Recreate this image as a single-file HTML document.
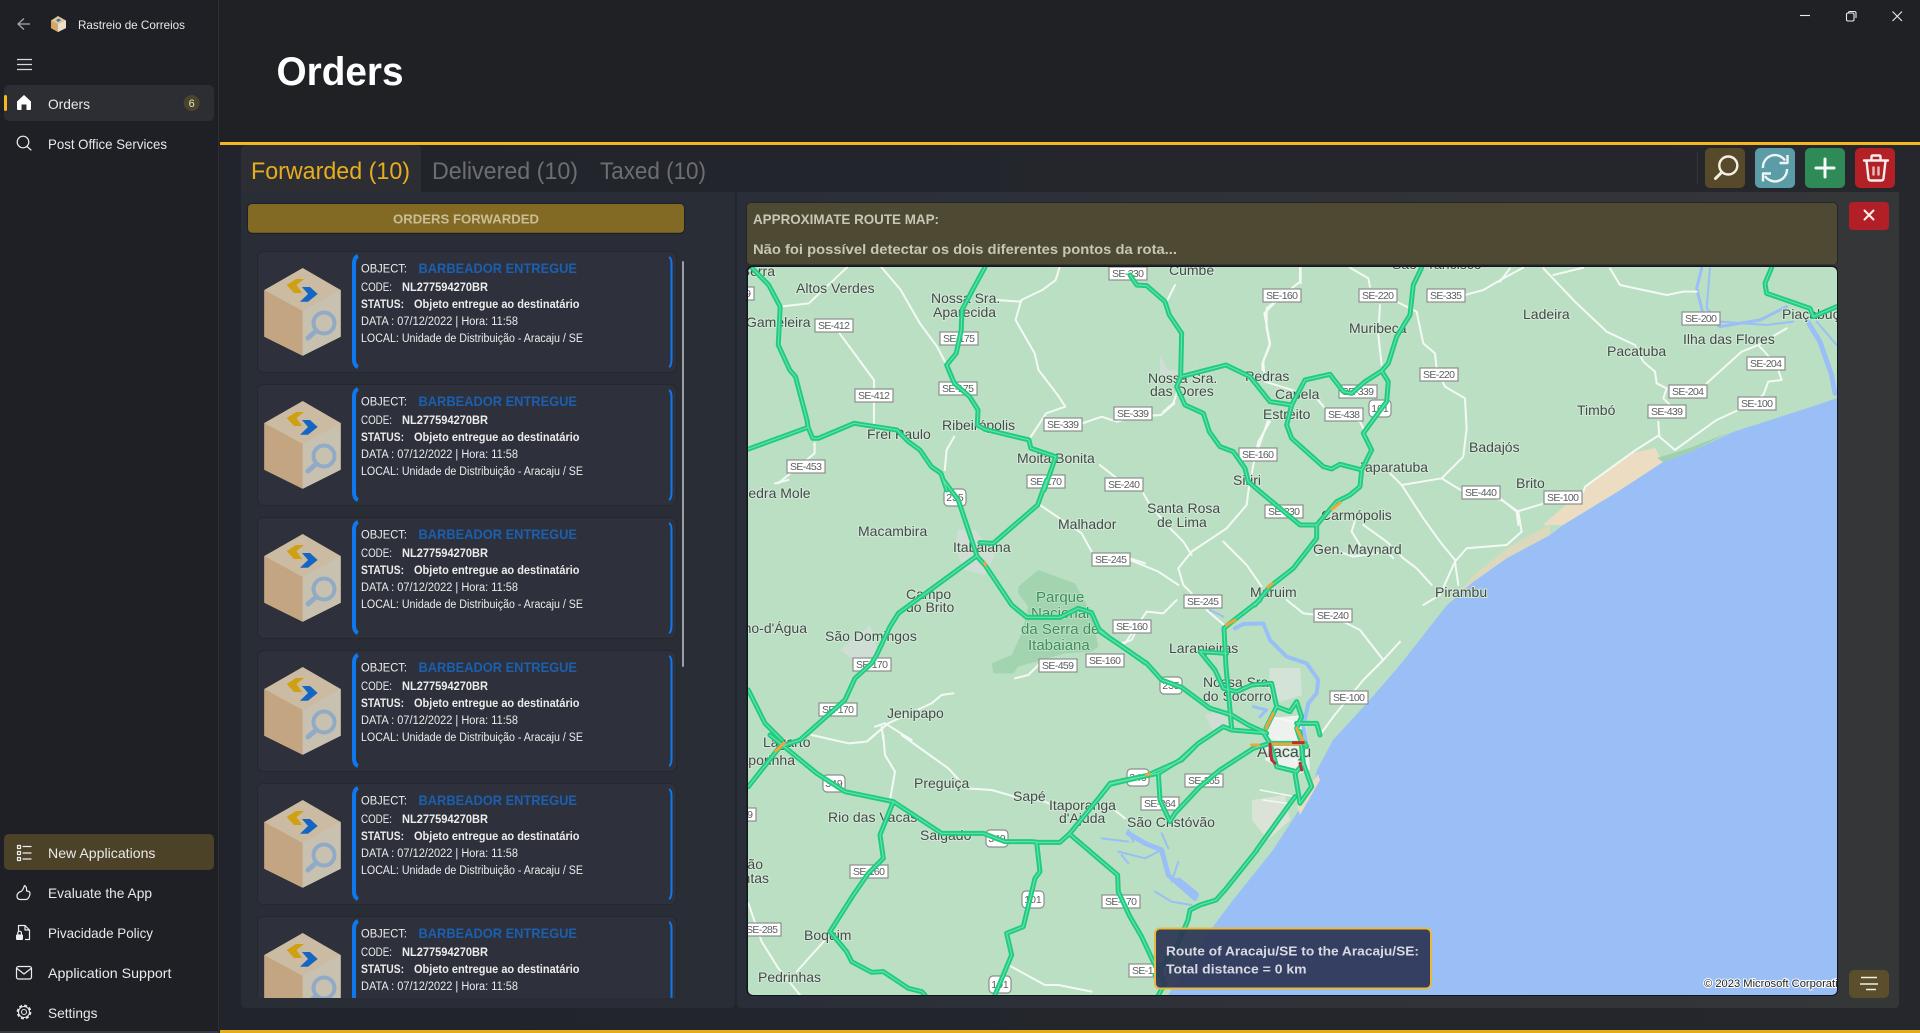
<!DOCTYPE html>
<html lang="en"><head><meta charset="utf-8"><title>Rastreio de Correios</title>
<style>
html,body{margin:0;padding:0;background:#1f2125;width:1920px;height:1033px;overflow:hidden}
svg{display:block;font-family:"Liberation Sans",Arial,sans-serif}
#traf path,.w path,.rv path{vector-effect:non-scaling-stroke}
.w{fill:none;stroke:#f4f9f5;stroke-width:2;stroke-linejoin:round;stroke-linecap:round}
.rv{fill:none;stroke:#9abff6;stroke-linejoin:round;stroke-linecap:round}
.l{font-size:14px;fill:#434c47;paint-order:stroke;stroke:#d3e9d8;stroke-width:2px}
.p{font-size:15px;fill:#3e8c5c;paint-order:stroke;stroke:#c5e5cd;stroke-width:1.5px}
.s rect{fill:#fff;stroke:#8a8f8c;stroke-width:1.2}
.s text{font-size:10.5px;fill:#5a605d;text-anchor:middle}
.n{font-size:14px;fill:#e9e9ea}
.c1{font-size:12px;fill:#ececec}
.c2{font-size:11.5px;fill:#ececec}
.b{font-weight:bold}
.ic{fill:none;stroke:#ededed;stroke-width:1.2;stroke-linecap:round;stroke-linejoin:round}
</style></head><body>
<svg xmlns="http://www.w3.org/2000/svg" width="1920" height="1033" viewBox="0 0 1920 1033">
<defs>
<clipPath id="mc"><rect x="748" y="267" width="1089" height="728" rx="5"/></clipPath>
<clipPath id="lc"><rect x="250" y="240" width="440" height="758"/></clipPath>
<filter id="bl" x="-1%" y="-1%" width="102%" height="102%"><feGaussianBlur stdDeviation=".35"/></filter>
<linearGradient id="pg" x1="0" x2="1" y1="0" y2="0"><stop offset="0" stop-color="#2a2e38"/><stop offset="1" stop-color="#353638"/></linearGradient>
<linearGradient id="mg" x1="0" x2="1" y1="0" y2="0"><stop offset="0" stop-color="#21242c"/><stop offset="1" stop-color="#26272c"/></linearGradient>
<g id="box">
<polygon points="302.7,268 340.7,290 340.7,336.7 302.7,355.7 264.3,336.7 264.3,290" fill="#cbbba2"/>
<polygon points="264.3,290 302.7,311 302.7,355.7 264.3,336.7" fill="#c3a681"/>
<polygon points="302.7,311 340.7,290 340.7,336.7 302.7,355.7" fill="#c9c1b0"/>
<path d="M286.7 285L296 279H304L296.5 285L302 293H294Z" fill="#cfa112"/>
<path d="M302 287H310L317.7 294L308 301.7H300L308 294Z" fill="#1466c4"/>
<circle cx="324" cy="323" r="10.5" fill="none" stroke="#91abc6" stroke-width="4"/>
<path d="M316 331L308 338" stroke="#91abc6" stroke-width="5" stroke-linecap="round"/>
</g>
<g id="card">
<rect x="257.5" y="251.5" width="419" height="121" rx="6" fill="#2e313b" stroke="#25272f"/>
<path d="M358 256C355.500 257 354 260 354 264V359C354 363 355.500 366 358 367" fill="none" stroke="#0f78ec" stroke-width="4"/>
<path d="M669 257C671 258 671.500 261 671.500 264V359C671.500 363 671 366 669 367" fill="none" stroke="#0f78ec" stroke-width="2"/>
<use href="#box"/>
</g>
<g id="traf">
<g transform="translate(740,190) scale(.3827,.3333)">
<path d="M30 232L75 285L105 350L100 465L130 540L145 560L175 690L178 712L190 745L205 745L298 700L410 720L440 755L470 780L500 830L525 850L540 900"/>
<path d="M20 778L178 712"/>
<path d="M640 232L610 295L580 360L578 420L565 490L540 525L560 580L600 620L622 660L620 705L640 718L755 750L760 775L825 800L795 900"/>
</g>
<g transform="translate(1130,265) scale(.3333)">
<path d="M0 30L20 60L50 62L105 110L118 150L155 205L152 335L288 300L360 335L420 410L485 420L525 345L600 328L640 380L665 385L705 350L755 318L775 295L800 215L840 150L850 60L875 8"/>
<path d="M152 335L140 365L165 420L220 445L238 500L270 545L310 560L345 610L355 650L390 680L510 780L560 780L560 820L490 910L420 965L375 1020"/>
<path d="M485 420L470 480L485 520L580 605L605 612L630 598L695 615L690 665L660 690L620 710L560 780"/>
<path d="M755 318L775 350L770 410L700 505L725 555L695 615"/>
</g>
<g transform="translate(745,480) scale(.3333)">
<path d="M595 0L640 60L695 225"/>
<path d="M905 0L878 75L745 190L705 188"/>
<path d="M695 228L460 400L435 440L395 525L380 550L330 595L300 660L165 780"/>
<path d="M695 228L720 255L800 375L845 412L945 412L1000 385L1040 398L1065 455L1125 495L1200 548"/>
<path d="M10 630L60 730L110 780"/>
</g>
<g transform="translate(745,735) scale(.3333)">
<path d="M165 15L105 35L10 155"/>
<path d="M75 0L215 115L300 170L445 200L590 295L715 295L780 320L860 320L880 322L945 322L975 295L1095 148L1205 122L1310 75L1350 35"/>
<path d="M445 200L405 300L415 370L370 415L325 480L255 590L305 650L320 680L380 712L415 710L490 760L530 770L540 780"/>
<path d="M875 322L885 410L870 430L835 575L785 595L800 660L750 780"/>
<path d="M975 298L1118 420L1120 470L1155 545L1190 605L1225 680L1260 745L1235 790"/>
</g>
<g transform="translate(1100,600) scale(.3333)">
<path d="M480 0L400 62L372 85L378 200L395 385"/>
<path d="M0 90L30 115L140 190L185 240L245 262L330 325L395 345L445 375L500 400"/>
<path d="M300 155L380 160M300 155L345 210L370 265L410 275L455 255L515 250L530 320L570 335L590 305L605 350L590 385L600 415L620 440"/>
<path d="M0 590L30 550L100 535L175 520L240 480L295 430L370 380L395 390L490 398L510 430L615 430"/>
<path d="M175 520L180 600L210 665L225 640L300 560L360 510L460 445L510 430"/>
<path d="M510 430L530 500L590 515L610 490L600 395"/>
<path d="M590 370L650 370L660 405"/>
<path d="M530 320L498 385"/>
<path d="M610 490L635 560L600 610L585 520M585 590L470 750"/>
</g>
<path d="M1257 850L1225 890L1216 900L1200 905L1190 910L1188 920L1175 950L1155 975"/>
<g transform="translate(1500,265) scale(.3333)">
<path d="M815 8L795 55L800 85L930 130L940 155L1010 125"/>
</g>
</g>
</defs>

<!-- shell -->
<rect width="1920" height="1033" fill="#1f2125"/>
<rect x="0" y="0" width="218" height="1033" fill="#1e2026"/>
<rect x="218" y="0" width="1" height="1033" fill="#2d2f33"/>
<rect x="220" y="145" width="1700" height="885" fill="url(#mg)"/>
<rect x="220" y="142" width="1700" height="3" fill="#f4b71e"/>
<rect x="220" y="1030" width="1700" height="3" fill="#e6ab1d"/>
<rect x="0" y="1031" width="218" height="2" fill="#35373b"/>

<!-- window controls -->
<g fill="none" stroke="#ececec" stroke-width="1.1">
<path d="M1800 15.500H1810"/>
<rect x="1846.500" y="13" width="7.500" height="8" rx="1.500"/>
<path d="M1848.500 12.500Q1848.500 11.500 1850 11.500H1854.500Q1856 11.500 1856 13V18"/>
<path d="M1892.500 11.500L1902 21M1902 11.500L1892.500 21"/>
</g>

<!-- sidebar top -->
<path d="M30 24H18.500M24 18.500L18 24L24 29.500" fill="none" stroke="#a9aaac" stroke-width="1.200"/>
<polygon points="58,16 66,20.500 66,28 58,32 51,28 51,20.500" fill="#e2c595"/>
<polygon points="51,20.500 58,24 58,32 51,28" fill="#d6a668"/>
<polygon points="58,24 66,20.500 66,28 58,32" fill="#e8dfcc"/>
<path d="M56 20L59 18.500L61 20.500L58 22Z" fill="#2a78c8"/>
<text x="78" y="29" font-size="12" fill="#e8e8e8" textLength="107" lengthAdjust="spacingAndGlyphs">Rastreio de Correios</text>
<path d="M17 59.500H32M17 64.500H32M17 69.500H32" stroke="#d8d8d8" stroke-width="1.200"/>

<rect x="4" y="85" width="210" height="36" rx="5" fill="#2d2e33"/>
<rect x="4" y="95" width="3" height="16" rx="1.500" fill="#f4b71e"/>
<path d="M24 95L31 101.500V109Q31 110 30 110H26.500V104.500H21.500V110H18Q17 110 17 109V101.500Z" fill="#fff"/>
<text x="48" y="109" class="n" textLength="42" lengthAdjust="spacingAndGlyphs">Orders</text>
<circle cx="191.700" cy="103" r="8" fill="#4b442a"/>
<text x="191.700" y="107" font-size="11" fill="#e4e0d2" text-anchor="middle">6</text>
<g class="ic"><circle cx="23" cy="142" r="5.800"/><path d="M27 146.500L31 150"/></g>
<text x="48" y="149" class="n" textLength="119" lengthAdjust="spacingAndGlyphs">Post Office Services</text>

<!-- sidebar bottom -->
<rect x="4" y="834" width="210" height="36" rx="5" fill="#4c4227"/>
<g class="ic"><rect x="17.500" y="845.500" width="3" height="3"/><rect x="17.500" y="851.500" width="3" height="3"/><rect x="17.500" y="857.500" width="3" height="3"/><path d="M23 846.500H31M23 853H31M23 859H31"/></g>
<text x="48" y="858" class="n" textLength="107.500" lengthAdjust="spacingAndGlyphs">New Applications</text>
<path class="ic" d="M24.500 885.500C23.500 888 23 890.500 21 891.500C18.500 892 17 894 17 896C17 898.500 18.500 899.500 20.500 899.500H26C28 899.500 30 896 30 893.500C30 891.500 28.500 891 26.500 891C26.800 888.500 26.500 886.500 24.500 885.500Z"/>
<text x="48" y="898" class="n" textLength="104" lengthAdjust="spacingAndGlyphs">Evaluate the App</text>
<g class="ic"><path d="M18.500 931V925.500H25L29.500 930V939.500H25.500M25 925.500V930H29.500"/><path d="M17.800 934.500V933A1.800 1.800 0 0 1 21.400 933V934.500"/></g>
<rect x="16" y="934.500" width="7" height="5.500" rx="1" fill="#f0f0f0"/>
<text x="48" y="938" class="n" textLength="105" lengthAdjust="spacingAndGlyphs">Pivacidade Policy</text>
<g class="ic"><rect x="16.500" y="966.500" width="15" height="12.500" rx="2"/><path d="M17 968.500L24 974L31 968.500"/></g>
<text x="48" y="978" class="n" textLength="123.500" lengthAdjust="spacingAndGlyphs">Application Support</text>
<g fill="none" stroke="#e4e4e4"><circle cx="24" cy="1012" r="2.500" stroke-width="1.100"/><circle cx="24" cy="1012" r="5.500" stroke-width="1.100"/><circle cx="24" cy="1012" r="6.500" stroke-width="1.800" stroke-dasharray="3 2.100"/></g>
<text x="48" y="1018" class="n" textLength="49.500" lengthAdjust="spacingAndGlyphs">Settings</text>

<!-- title -->
<text x="276.500" y="85" font-size="40" font-weight="bold" fill="#fff" textLength="127" lengthAdjust="spacingAndGlyphs">Orders</text>

<!-- tabs -->
<path d="M241 192V150Q241 145 246 145H416Q421 145 421 150V192Z" fill="#2c2e33"/>
<text x="251" y="179" font-size="24" fill="#e6ad1e" textLength="159" lengthAdjust="spacingAndGlyphs">Forwarded (10)</text>
<text x="432" y="179" font-size="24" fill="#6c6e72" textLength="146" lengthAdjust="spacingAndGlyphs">Delivered (10)</text>
<text x="600" y="179" font-size="24" fill="#6c6e72" textLength="106" lengthAdjust="spacingAndGlyphs">Taxed (10)</text>

<!-- toolbar -->
<rect x="1697" y="152" width="1" height="32" fill="#33353b"/>
<rect x="1705" y="148" width="40" height="40" rx="5" fill="#574a2a"/>
<g fill="none" stroke="#f4f0e4"><circle cx="1728.300" cy="165.500" r="9" stroke-width="2.400"/><path d="M1721.500 172.500L1715.500 178.500" stroke-width="3" stroke-linecap="round"/></g>
<rect x="1755" y="148" width="40" height="40" rx="5" fill="#5b9ca6"/>
<g fill="none" stroke="#eef5f5" stroke-width="2.400" stroke-linejoin="round">
<path d="M1763 168A12 12 0 0 1 1785 160.500"/><path d="M1787.500 155V163H1779.500" stroke-width="2.400"/>
<path d="M1787 169A12 12 0 0 1 1765 176"/><path d="M1763 181.500V173.500H1771"/>
</g>
<rect x="1805" y="148" width="40" height="40" rx="5" fill="#2e8a57"/>
<path d="M1825 159V177M1816 168H1834" stroke="#f4faf6" stroke-width="3" stroke-linecap="round"/>
<rect x="1855" y="148" width="40" height="40" rx="5" fill="#b32025"/>
<g fill="none" stroke="#f6eeee" stroke-width="2.400" stroke-linejoin="round" stroke-linecap="round">
<path d="M1864 160.500H1888M1871.500 160V157Q1871.500 155.500 1873 155.500H1879Q1880.500 155.500 1880.500 157V160"/>
<path d="M1866.500 161L1868.500 178.500Q1868.800 180.500 1871 180.500H1881Q1883.200 180.500 1883.500 178.500L1885.500 161"/>
<path d="M1873.500 167.500V174.500M1878.500 167.500V174.500" stroke="#e2b9b9" stroke-width="2.500"/>
</g>

<!-- panels -->
<path d="M241 192H735V1003Q735 1008 730 1008H246Q241 1008 241 1003Z" fill="#292d36"/>
<path d="M737 192H1899V1003Q1899 1008 1894 1008H742Q737 1008 737 1003Z" fill="url(#pg)"/>

<!-- left list -->
<rect x="247" y="203" width="438" height="31" rx="5" fill="#1f2128"/>
<rect x="248" y="204" width="436" height="28.700" rx="4" fill="#826a24"/>
<text x="466" y="223.500" font-size="13" font-weight="bold" fill="#c9bd95" text-anchor="middle" textLength="146" lengthAdjust="spacingAndGlyphs">ORDERS FORWARDED</text>
<rect x="682" y="261" width="2" height="406" rx="1" fill="#9c9ea2"/>

<g clip-path="url(#lc)">
<g><use href="#card"/>
<text x="361" y="272.500" class="c1" textLength="46" lengthAdjust="spacingAndGlyphs">OBJECT:</text>
<text x="418.500" y="273" font-size="14" class="b" fill="#1b5fae" textLength="158.500" lengthAdjust="spacingAndGlyphs">BARBEADOR ENTREGUE</text>
<text x="361" y="291" class="c2" textLength="31" lengthAdjust="spacingAndGlyphs">CODE:</text>
<text x="402" y="291" class="c2 b" textLength="86" lengthAdjust="spacingAndGlyphs">NL277594270BR</text>
<text x="361" y="308" class="c2 b" textLength="43" lengthAdjust="spacingAndGlyphs">STATUS:</text>
<text x="414" y="308" class="c2 b" textLength="165.500" lengthAdjust="spacingAndGlyphs">Objeto entregue ao destinatário</text>
<text x="361" y="325" class="c2" textLength="157" lengthAdjust="spacingAndGlyphs">DATA : 07/12/2022 | Hora: 11:58</text>
<text x="361" y="342" class="c2" textLength="222" lengthAdjust="spacingAndGlyphs">LOCAL: Unidade de Distribuição - Aracaju / SE</text></g>
<g transform="translate(0,133)"><use href="#card"/>
<text x="361" y="272.500" class="c1" textLength="46" lengthAdjust="spacingAndGlyphs">OBJECT:</text>
<text x="418.500" y="273" font-size="14" class="b" fill="#1b5fae" textLength="158.500" lengthAdjust="spacingAndGlyphs">BARBEADOR ENTREGUE</text>
<text x="361" y="291" class="c2" textLength="31" lengthAdjust="spacingAndGlyphs">CODE:</text>
<text x="402" y="291" class="c2 b" textLength="86" lengthAdjust="spacingAndGlyphs">NL277594270BR</text>
<text x="361" y="308" class="c2 b" textLength="43" lengthAdjust="spacingAndGlyphs">STATUS:</text>
<text x="414" y="308" class="c2 b" textLength="165.500" lengthAdjust="spacingAndGlyphs">Objeto entregue ao destinatário</text>
<text x="361" y="325" class="c2" textLength="157" lengthAdjust="spacingAndGlyphs">DATA : 07/12/2022 | Hora: 11:58</text>
<text x="361" y="342" class="c2" textLength="222" lengthAdjust="spacingAndGlyphs">LOCAL: Unidade de Distribuição - Aracaju / SE</text></g>
<g transform="translate(0,266)"><use href="#card"/>
<text x="361" y="272.500" class="c1" textLength="46" lengthAdjust="spacingAndGlyphs">OBJECT:</text>
<text x="418.500" y="273" font-size="14" class="b" fill="#1b5fae" textLength="158.500" lengthAdjust="spacingAndGlyphs">BARBEADOR ENTREGUE</text>
<text x="361" y="291" class="c2" textLength="31" lengthAdjust="spacingAndGlyphs">CODE:</text>
<text x="402" y="291" class="c2 b" textLength="86" lengthAdjust="spacingAndGlyphs">NL277594270BR</text>
<text x="361" y="308" class="c2 b" textLength="43" lengthAdjust="spacingAndGlyphs">STATUS:</text>
<text x="414" y="308" class="c2 b" textLength="165.500" lengthAdjust="spacingAndGlyphs">Objeto entregue ao destinatário</text>
<text x="361" y="325" class="c2" textLength="157" lengthAdjust="spacingAndGlyphs">DATA : 07/12/2022 | Hora: 11:58</text>
<text x="361" y="342" class="c2" textLength="222" lengthAdjust="spacingAndGlyphs">LOCAL: Unidade de Distribuição - Aracaju / SE</text></g>
<g transform="translate(0,399)"><use href="#card"/>
<text x="361" y="272.500" class="c1" textLength="46" lengthAdjust="spacingAndGlyphs">OBJECT:</text>
<text x="418.500" y="273" font-size="14" class="b" fill="#1b5fae" textLength="158.500" lengthAdjust="spacingAndGlyphs">BARBEADOR ENTREGUE</text>
<text x="361" y="291" class="c2" textLength="31" lengthAdjust="spacingAndGlyphs">CODE:</text>
<text x="402" y="291" class="c2 b" textLength="86" lengthAdjust="spacingAndGlyphs">NL277594270BR</text>
<text x="361" y="308" class="c2 b" textLength="43" lengthAdjust="spacingAndGlyphs">STATUS:</text>
<text x="414" y="308" class="c2 b" textLength="165.500" lengthAdjust="spacingAndGlyphs">Objeto entregue ao destinatário</text>
<text x="361" y="325" class="c2" textLength="157" lengthAdjust="spacingAndGlyphs">DATA : 07/12/2022 | Hora: 11:58</text>
<text x="361" y="342" class="c2" textLength="222" lengthAdjust="spacingAndGlyphs">LOCAL: Unidade de Distribuição - Aracaju / SE</text></g>
<g transform="translate(0,532)"><use href="#card"/>
<text x="361" y="272.500" class="c1" textLength="46" lengthAdjust="spacingAndGlyphs">OBJECT:</text>
<text x="418.500" y="273" font-size="14" class="b" fill="#1b5fae" textLength="158.500" lengthAdjust="spacingAndGlyphs">BARBEADOR ENTREGUE</text>
<text x="361" y="291" class="c2" textLength="31" lengthAdjust="spacingAndGlyphs">CODE:</text>
<text x="402" y="291" class="c2 b" textLength="86" lengthAdjust="spacingAndGlyphs">NL277594270BR</text>
<text x="361" y="308" class="c2 b" textLength="43" lengthAdjust="spacingAndGlyphs">STATUS:</text>
<text x="414" y="308" class="c2 b" textLength="165.500" lengthAdjust="spacingAndGlyphs">Objeto entregue ao destinatário</text>
<text x="361" y="325" class="c2" textLength="157" lengthAdjust="spacingAndGlyphs">DATA : 07/12/2022 | Hora: 11:58</text>
<text x="361" y="342" class="c2" textLength="222" lengthAdjust="spacingAndGlyphs">LOCAL: Unidade de Distribuição - Aracaju / SE</text></g>
<g transform="translate(0,665)"><use href="#card"/>
<text x="361" y="272.500" class="c1" textLength="46" lengthAdjust="spacingAndGlyphs">OBJECT:</text>
<text x="418.500" y="273" font-size="14" class="b" fill="#1b5fae" textLength="158.500" lengthAdjust="spacingAndGlyphs">BARBEADOR ENTREGUE</text>
<text x="361" y="291" class="c2" textLength="31" lengthAdjust="spacingAndGlyphs">CODE:</text>
<text x="402" y="291" class="c2 b" textLength="86" lengthAdjust="spacingAndGlyphs">NL277594270BR</text>
<text x="361" y="308" class="c2 b" textLength="43" lengthAdjust="spacingAndGlyphs">STATUS:</text>
<text x="414" y="308" class="c2 b" textLength="165.500" lengthAdjust="spacingAndGlyphs">Objeto entregue ao destinatário</text>
<text x="361" y="325" class="c2" textLength="157" lengthAdjust="spacingAndGlyphs">DATA : 07/12/2022 | Hora: 11:58</text></g>
</g>

<!-- right head -->
<rect x="746" y="202" width="1092" height="63" rx="5" fill="#24262c"/>
<rect x="747" y="203" width="1090" height="61.500" rx="4" fill="#4e4933"/>
<text x="753" y="224" font-size="14" class="b" fill="#c8c6b5" textLength="186" lengthAdjust="spacingAndGlyphs">APPROXIMATE ROUTE MAP:</text>
<text x="753" y="254" font-size="14" class="b" fill="#c8c6b5" textLength="424" lengthAdjust="spacingAndGlyphs">Não foi possível detectar os dois diferentes pontos da rota...</text>
<rect x="1849" y="202" width="40" height="28" rx="4" fill="#b31f26"/>
<path d="M1864.500 210.500L1873.500 219.500M1873.500 210.500L1864.500 219.500" stroke="#fbeeee" stroke-width="2" stroke-linecap="round"/>

<!-- map -->
<rect x="746.500" y="265.500" width="1091.500" height="730.500" rx="6" fill="#11151f"/>
<g clip-path="url(#mc)">
<g filter="url(#bl)">
<rect x="748" y="267" width="1089" height="728" fill="#bbdfc3"/>
<!-- urban patches -->
<g fill="#cfddd4">
<path d="M1160 355L1168 370L1190 372L1200 360L1190 375L1180 380L1160 375Z"/>
<path d="M958 530L975 530L995 555L985 575L965 570L955 550Z"/>
<path d="M840 650L870 625L880 660L860 665Z"/>
<path d="M1205 715L1220 710L1232 725L1215 735Z"/>
<path d="M1270 668L1300 668L1302 695L1280 702L1268 690Z" fill="#d3e3d8"/>
<path d="M1252 800L1285 795L1290 820L1268 840L1252 820Z" fill="#dbe3d6"/>
</g>
<path d="M1268 718L1305 715L1310 770L1295 775L1265 760Z" fill="#eef2ee"/>
<!-- park -->
<path transform="translate(745,480) scale(.3333)" d="M820 320L880 270L990 310L1040 400L1060 500L1040 515L960 520L820 560L805 580L745 580L740 550L800 525L830 460L850 380L820 340Z" fill="#a2d5af"/>
<!-- sea -->
<path d="M1837 398L1817 405L1733 432L1690 452L1663 462L1617 492L1563 525L1550 535L1507 558L1473 582L1447 605L1400 665L1367 703L1333 740L1317 770L1312 790L1297 813L1273 850L1233 900L1212 928L1168 995H1837Z" fill="#9abff6"/>
<!-- beach -->
<path d="M1655 448L1633 453L1585 488L1543 525L1563 525L1617 492L1663 462Z" fill="#ecdcc2"/>
<path d="M1550 524L1507 548L1475 574L1447 605L1473 582L1507 558L1550 535Z" fill="#dcd8bd"/>
<path d="M1657 458L1690 448L1730 432L1690 452L1663 462Z" fill="#9ed1a9"/>
<path d="M1297 805L1318 774L1320 780L1300 815Z" fill="#e8dcc4"/>
<!-- rivers -->
<g class="rv" transform="translate(1500,265) scale(.3333)">
<path stroke-width="3" d="M605 10L590 70L610 150L660 185L780 165L860 125"/>
<path stroke-width="2" d="M630 10L620 130L660 170L800 180L880 170"/>
<path stroke-width="5" d="M920 165L960 230L995 330L1005 385"/>
<path stroke-width="2" d="M950 170L1010 240"/>
</g>
<g class="rv" transform="translate(1100,600) scale(.3333)">
<path stroke-width="4" d="M405 85L430 72L490 70L510 120L560 170L620 190L655 240L650 280L625 310L610 380L620 440"/>
<path stroke-width="2" d="M330 30L370 50"/>
<path stroke-width="3" d="M460 320L500 330L480 350"/>
</g>
<g class="rv" transform="translate(745,735) scale(.3333)">
<path stroke-width="5" d="M1150 295L1200 325L1250 345L1270 420L1350 490"/>
<path stroke-width="2" d="M1070 310L1150 320M1120 350L1200 370L1250 345M1230 470L1280 500L1340 510M1150 285L1165 320M1250 295L1270 340M1130 360L1150 385M1300 380L1280 440"/>
<path stroke-width="8" d="M1300 440L1350 480"/>
</g>
<!-- white roads -->
<g class="w" transform="translate(740,190) scale(.3827,.3333)">
<path d="M370 232L420 300L470 400L515 470L540 525"/>
<path d="M835 232L825 270L790 300L735 330L720 390L770 490L780 540L830 615L850 650L800 670L760 740"/>
<path d="M105 350L180 340L280 232"/>
<path d="M260 430L350 570L350 700"/>
<path d="M735 335L670 330"/>
<path d="M1465 232V280"/>
<path d="M1400 335L1370 370L1385 460L1365 520V540"/>
<path d="M895 700L945 680L985 695L1030 680L1100 675L1135 640"/>
<path d="M195 760V790L100 880"/>
<path d="M560 740L540 780L535 840"/>
<path d="M1380 690L1350 790"/>
<path d="M940 825L990 870"/>
</g>
<g class="w" transform="translate(1130,265) scale(.3333)">
<path d="M510 8V50L410 130V190L420 240L400 290L405 350"/>
<path d="M660 8L715 40L720 65"/>
<path d="M750 120L745 210L755 300"/>
<path d="M790 105L860 140L880 235L915 265L920 310L945 365L1005 400L1010 490L1000 575L935 640L815 660L780 625"/>
<path d="M935 640L1000 680L1115 705L1165 740L1175 800L1130 840L1010 850L975 890L985 960"/>
<path d="M1005 90L1060 75L1120 40L1180 8"/>
<path d="M815 660L880 760L930 830L975 885"/>
<path d="M405 350L470 370L560 400L585 430L690 470L700 490"/>
<path d="M420 470L385 530L370 600L355 680L350 720L290 790L185 860L145 910L160 960L185 985"/>
<path d="M40 685L60 720L120 790L160 830L185 870"/>
<path d="M0 885L85 920L145 960"/>
<path d="M280 830L350 900L395 965"/>
<path d="M100 440L130 415L145 370"/>
<path d="M135 60L110 110"/>
<path d="M680 750L665 800L690 840M700 780L770 830L820 880L860 910L905 960"/>
<path d="M560 870L600 850L670 875L770 860L790 880"/>
<path d="M975 890L930 990L880 1020"/>
</g>
<g class="w" transform="translate(1500,265) scale(.3333)">
<path d="M130 10L225 110L320 200L405 240L430 290L465 320L470 355L500 370L490 400L510 420M475 470L478 515L525 555L580 515L650 465L715 435L790 390L805 350L845 345L830 300L775 240L860 190"/>
<path d="M0 50L30 10M160 30L250 8"/>
<path d="M330 10L360 60L500 90L550 80L590 80"/>
<path d="M478 510L400 560L255 665L250 680L50 740M0 700L50 740L55 780"/>
<path d="M620 355L725 260L775 240"/>
</g>
<g class="w" transform="translate(745,480) scale(.3333)">
<path d="M885 75L1010 160L1040 215M1155 235L1200 250"/>
<path d="M90 10L130 0"/>
<path d="M810 595L850 585L880 555"/>
<path d="M625 640L590 645L560 670L430 730L370 780M390 740L420 730L500 780M410 740L415 780"/>
<path d="M1130 490L1160 480L1170 460"/>
</g>
<g class="w" transform="translate(745,735) scale(.3333)">
<path d="M200 0L310 25L365 20L390 0"/>
<path d="M415 0L420 60L450 110L435 195"/>
<path d="M470 0L610 100L665 160L740 165L810 185L900 200L920 210"/>
<path d="M1090 210L1140 250"/>
<path d="M10 505L50 620L100 700L165 780"/>
<path d="M245 610L155 710"/>
<path d="M790 690L900 750L940 750L1040 770"/>
</g>
<g class="w" transform="translate(1100,600) scale(.3333)">
<path d="M75 130L140 35L190 40L230 0"/>
<path d="M320 30L372 75"/>
<path d="M560 0L610 40L700 50L780 90L850 180L900 125"/>
<path d="M660 405L700 350L790 240L850 180"/>
<path d="M510 350L600 370M530 410L600 500M480 570L585 590M490 600L560 610" stroke-width="1.500"/>
</g>
<!-- labels -->
<text x="775" y="276" class="l" text-anchor="end">Serra</text>
<text x="796" y="293" class="l">Altos Verdes</text>
<text x="931" y="303" class="l">Nossa Sra.</text>
<text x="933" y="317" class="l">Aparecida</text>
<text x="746" y="327" class="l">Gameleira</text>
<text x="867" y="439" class="l">Frei Paulo</text>
<text x="942" y="430" class="l">Ribeirópolis</text>
<text x="1017" y="463" class="l">Moita Bonita</text>
<text x="1169" y="275" class="l">Cumbe</text>
<text x="1392" y="269" class="l">São Francisco</text>
<text x="1148" y="383" class="l">Nossa Sra.</text>
<text x="1150" y="396" class="l">das Dores</text>
<text x="1245" y="381" class="l">Pedras</text>
<text x="1275" y="399" class="l">Capela</text>
<text x="1263" y="419" class="l">Estreito</text>
<text x="1349" y="333" class="l">Muribeca</text>
<text x="1523" y="319" class="l">Ladeira</text>
<text x="1358" y="472" class="l">Japaratuba</text>
<text x="1321" y="520" class="l">Carmópolis</text>
<text x="1313" y="554" class="l">Gen. Maynard</text>
<text x="1250" y="597" class="l">Maruim</text>
<text x="1435" y="597" class="l">Pirambu</text>
<text x="1469" y="452" class="l">Badajós</text>
<text x="1516" y="488" class="l">Brito</text>
<text x="1233" y="485" class="l">Siriri</text>
<text x="1147" y="513" class="l">Santa Rosa</text>
<text x="1157" y="527" class="l">de Lima</text>
<text x="1607" y="356" class="l">Pacatuba</text>
<text x="1577" y="415" class="l">Timbó</text>
<text x="1683" y="344" class="l">Ilha das Flores</text>
<text x="1782" y="319" class="l">Piaçabuçu</text>
<text x="739" y="498" class="l">Pedra Mole</text>
<text x="858" y="536" class="l">Macambira</text>
<text x="953" y="552" class="l">Itabaiana</text>
<text x="1058" y="529" class="l">Malhador</text>
<text x="906" y="599" class="l">Campo</text>
<text x="906" y="612" class="l">do Brito</text>
<text x="807" y="633" class="l" text-anchor="end">Olho-d'Água</text>
<text x="825" y="641" class="l">São Domingos</text>
<text x="887" y="718" class="l">Jenipapo</text>
<text x="1036" y="602" class="p">Parque</text>
<text x="1031" y="618" class="p">Nacional</text>
<text x="1021" y="634" class="p">da Serra de</text>
<text x="1028" y="650" class="p">Itabaiana</text>
<text x="763" y="747" class="l">Lagarto</text>
<text x="795" y="765" class="l" text-anchor="end">Itaporinha</text>
<text x="763" y="869" class="l" text-anchor="end">Riachão</text>
<text x="769" y="883" class="l" text-anchor="end">do Dantas</text>
<text x="914" y="788" class="l">Preguiça</text>
<text x="1013" y="801" class="l">Sapé</text>
<text x="1049" y="810" class="l">Itaporanga</text>
<text x="1059" y="823" class="l">d'Ajuda</text>
<text x="1127" y="827" class="l">São Cristóvão</text>
<text x="828" y="822" class="l">Rio das Vacas</text>
<text x="920" y="840" class="l">Salgado</text>
<text x="804" y="940" class="l">Boquim</text>
<text x="758" y="982" class="l">Pedrinhas</text>
<text x="1169" y="653" class="l">Laranjeiras</text>
<text x="1203" y="687" class="l">Nossa Sra.</text>
<text x="1203" y="701" class="l">do Socorro</text>
<text x="1257" y="757" class="l" style="font-size:16px">Aracaju</text>
<!-- shields -->
<g class="s">
<rect x="716" y="287" width="38" height="13"/><text x="735" y="297" textLength="32">SE-339</text>
<rect x="718" y="808" width="38" height="13"/><text x="737" y="818" textLength="32">SE-339</text>
<rect x="815" y="319" width="38" height="13"/><text x="834" y="329" textLength="32">SE-412</text>
<rect x="855" y="389" width="38" height="13"/><text x="874" y="399" textLength="32">SE-412</text>
<rect x="940" y="332" width="38" height="13"/><text x="959" y="342" textLength="32">SE-175</text>
<rect x="939" y="382" width="38" height="13"/><text x="958" y="392" textLength="32">SE-175</text>
<rect x="787" y="460" width="38" height="13"/><text x="806" y="470" textLength="32">SE-453</text>
<rect x="1044" y="418" width="38" height="13"/><text x="1063" y="428" textLength="32">SE-339</text>
<rect x="1114" y="407" width="38" height="13"/><text x="1133" y="417" textLength="32">SE-339</text>
<rect x="1105" y="478" width="38" height="13"/><text x="1124" y="488" textLength="32">SE-240</text>
<rect x="1027" y="475" width="38" height="13"/><text x="1046" y="485" textLength="32">SE-170</text>
<rect x="1109" y="267" width="38" height="13"/><text x="1128" y="277" textLength="32">SE-230</text>
<rect x="1263" y="289" width="38" height="13"/><text x="1282" y="299" textLength="32">SE-160</text>
<rect x="1239" y="448" width="38" height="13"/><text x="1258" y="458" textLength="32">SE-160</text>
<rect x="1359" y="289" width="38" height="13"/><text x="1378" y="299" textLength="32">SE-220</text>
<rect x="1427" y="289" width="38" height="13"/><text x="1446" y="299" textLength="32">SE-335</text>
<rect x="1420" y="368" width="38" height="13"/><text x="1439" y="378" textLength="32">SE-220</text>
<rect x="1325" y="408" width="38" height="13"/><text x="1344" y="418" textLength="32">SE-438</text>
<rect x="1339" y="385" width="38" height="13"/><text x="1358" y="395" textLength="32">SE-339</text>
<rect x="1265" y="505" width="38" height="13"/><text x="1284" y="515" textLength="32">SE-230</text>
<rect x="1462" y="486" width="38" height="13"/><text x="1481" y="496" textLength="32">SE-440</text>
<rect x="1184" y="595" width="38" height="13"/><text x="1203" y="605" textLength="32">SE-245</text>
<rect x="1682" y="312" width="38" height="13"/><text x="1701" y="322" textLength="32">SE-200</text>
<rect x="1747" y="357" width="38" height="13"/><text x="1766" y="367" textLength="32">SE-204</text>
<rect x="1669" y="385" width="38" height="13"/><text x="1688" y="395" textLength="32">SE-204</text>
<rect x="1648" y="405" width="38" height="13"/><text x="1667" y="415" textLength="32">SE-439</text>
<rect x="1738" y="397" width="38" height="13"/><text x="1757" y="407" textLength="32">SE-100</text>
<rect x="1544" y="491" width="38" height="13"/><text x="1563" y="501" textLength="32">SE-100</text>
<rect x="1092" y="553" width="38" height="13"/><text x="1111" y="563" textLength="32">SE-245</text>
<rect x="1086" y="654" width="38" height="13"/><text x="1105" y="664" textLength="32">SE-160</text>
<rect x="1039" y="659" width="38" height="13"/><text x="1058" y="669" textLength="32">SE-459</text>
<rect x="853" y="658" width="38" height="13"/><text x="872" y="668" textLength="32">SE-170</text>
<rect x="819" y="703" width="38" height="13"/><text x="838" y="713" textLength="32">SE-170</text>
<rect x="1113" y="620" width="38" height="13"/><text x="1132" y="630" textLength="32">SE-160</text>
<rect x="1314" y="609" width="38" height="13"/><text x="1333" y="619" textLength="32">SE-240</text>
<rect x="1330" y="691" width="38" height="13"/><text x="1349" y="701" textLength="32">SE-100</text>
<rect x="1185" y="774" width="38" height="13"/><text x="1204" y="784" textLength="32">SE-265</text>
<rect x="1141" y="797" width="38" height="13"/><text x="1160" y="807" textLength="32">SE-264</text>
<rect x="743" y="923" width="38" height="13"/><text x="762" y="933" textLength="32">SE-285</text>
<rect x="850" y="865" width="38" height="13"/><text x="869" y="875" textLength="32">SE-160</text>
<rect x="1102" y="895" width="38" height="13"/><text x="1121" y="905" textLength="32">SE-170</text>
<rect x="1129" y="964" width="38" height="13"/><text x="1148" y="974" textLength="32">SE-170</text>
<rect x="944" y="489" width="22" height="17" rx="4"/><text x="955" y="501">235</text>
<rect x="823" y="775" width="22" height="17" rx="4"/><text x="834" y="787">349</text>
<rect x="986" y="830" width="22" height="17" rx="4"/><text x="997" y="842">349</text>
<rect x="1022" y="891" width="22" height="17" rx="4"/><text x="1033" y="903">101</text>
<rect x="989" y="976" width="22" height="17" rx="4"/><text x="1000" y="988">101</text>
<rect x="1127" y="769" width="22" height="17" rx="4"/><text x="1138" y="781">349</text>
<rect x="1369" y="400" width="22" height="17" rx="4"/><text x="1380" y="412">101</text>
<rect x="1160" y="677" width="22" height="17" rx="4"/><text x="1171" y="689">235</text>
</g>
<!-- traffic -->
<use href="#traf" fill="none" stroke="#1fcc80" stroke-width="5" stroke-linejoin="round" stroke-linecap="round"/>
<use href="#traf" fill="none" stroke="#68e0a8" stroke-width="1.200" stroke-linejoin="round" stroke-linecap="round"/>
<g transform="translate(1100,600) scale(.3333)" fill="none" stroke-linecap="round">
<path vector-effect="non-scaling-stroke" stroke="#f2a43a" stroke-width="3" d="M520 340L498 385M590 385L612 430M380 75L405 60M455 435H475M510 432H600M140 525L148 522"/>
<path vector-effect="non-scaling-stroke" stroke="#bf2f36" stroke-width="3" d="M510 432L515 480L525 490M600 490L605 510M580 428L610 428"/>
</g>
<path d="M1331 510L1341 502M1267 588L1273 583M984 562L986 566M775 752L785 742" stroke="#f2a43a" stroke-width="3" fill="none"/>
</g>
<!-- copyright -->
<text x="1704" y="987" font-size="11" fill="#222" textLength="146" lengthAdjust="spacingAndGlyphs" style="paint-order:stroke;stroke:#fff;stroke-width:2px">© 2023 Microsoft Corporation</text>
</g>

<!-- tooltip -->
<rect x="1155" y="928.500" width="276" height="60" rx="5" fill="#2b3454" fill-opacity=".92" stroke="#e9b93d" stroke-width="2"/>
<text x="1166" y="955.500" font-size="13" class="b" fill="#d8dae2" textLength="253" lengthAdjust="spacingAndGlyphs">Route of Aracaju/SE to the Aracaju/SE:</text>
<text x="1166" y="973.500" font-size="13" class="b" fill="#d8dae2" textLength="140.500" lengthAdjust="spacingAndGlyphs">Total distance = 0 km</text>

<!-- menu btn -->
<rect x="1849" y="970" width="40" height="28" rx="5" fill="#5a4e2c"/>
<path d="M1861 977.500H1877M1860 984H1878M1866 989.500H1876" stroke="#f1ede0" stroke-width="1.400"/>
</svg>
</body></html>
